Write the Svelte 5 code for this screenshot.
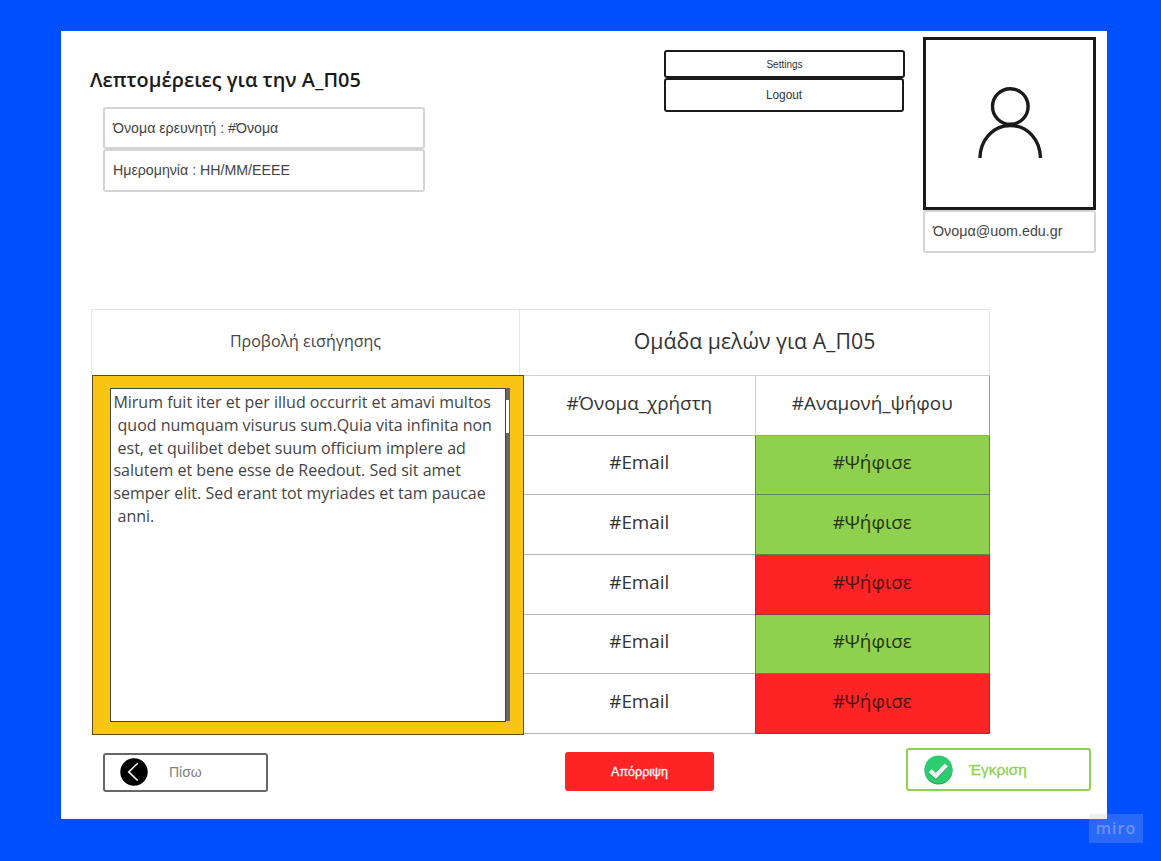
<script>
  const votes = [true, true, false, true, false];
  const proposal = [
    'Mirum fuit iter et per illud occurrit et amavi multos',
    ' quod numquam visurus sum.Quia vita infinita non',
    ' est, et quilibet debet suum officium implere ad',
    'salutem et bene esse de Reedout. Sed sit amet',
    'semper elit. Sed erant tot myriades et tam paucae',
    ' anni.'
  ];
</script>

<div class="board">
  <main class="panel">
    <header>
      <section class="details">
        <h1>Λεπτομέρειες για την Α_Π05</h1>
        <div class="field">Όνομα ερευνητή : #Όνομα</div>
        <div class="field date">Ημερομηνία : HH/MM/ΕΕΕΕ</div>
      </section>
      <nav>
        <button class="settings">Settings</button>
        <button class="logout">Logout</button>
      </nav>
      <section class="profile">
        <div class="avatar">
          <svg width="66" height="74" viewBox="0 0 66 74" fill="none" stroke="#1a1a1a" stroke-width="3.4">
            <circle cx="33.3" cy="20.5" r="17.8" />
            <path d="M2.900 72C3.400 53.500 16.100 39.500 33.300 39.500S63 53.500 63.500 72" />
          </svg>
        </div>
        <div class="field mail">Όνομα@uom.edu.gr</div>
      </section>
    </header>

    <section class="table">
      <div class="heads">
        <div class="head left"><span>Προβολή εισήγησης</span></div>
        <div class="head right"><span>Ομάδα μελών για Α_Π05</span></div>
      </div>
      <div class="content">
        <div class="proposal">
          <div class="text">{#each proposal as line}<p>{line}</p>{/each}</div>
          <div class="scroll"><div class="thumb"></div></div>
        </div>
        <div class="members">
          <div class="cell"><span>#Όνομα_χρήστη</span></div>
          <div class="cell vote"><span>#Αναμονή_ψήφου</span></div>
          {#each votes as yes}
            <div class="cell"><span>#Email</span></div>
            <div class="cell vote" class:yes class:no={!yes}><span>#Ψήφισε</span></div>
          {/each}
        </div>
      </div>
    </section>

    <footer>
      <button class="back">
        <svg width="28" height="28" viewBox="0 0 28 28">
          <circle cx="14" cy="14" r="13.700" fill="#000" />
          <path d="M17.700 5.300L8.700 13.900L17.700 22.500" fill="none" stroke="#fff" stroke-width="1.500" />
        </svg>
        <span>Πίσω</span>
      </button>
      <button class="reject"><span>Απόρριψη</span></button>
      <button class="approve">
        <svg width="29" height="30" viewBox="0 0 29 30">
          <circle cx="14.500" cy="15.500" r="14" fill="#20a35a" />
          <circle cx="14.500" cy="14.500" r="14" fill="#2ecc71" />
          <path d="M6.200 17L11.800 22.300L22.400 11.200" fill="none" stroke="#27ae60" stroke-width="4.400" />
          <path d="M6.200 15.700L11.800 21L22.400 9.900" fill="none" stroke="#ecf0f1" stroke-width="4.400" />
        </svg>
        <span>Έγκριση</span>
      </button>
    </footer>
  </main>
  <div class="watermark">miro</div>
</div>

<style>
  :global(body) { margin: 0; }
  .board, .board * { box-sizing: border-box; }
  .board {
    position: relative;
    width: 1161px;
    height: 861px;
    padding: 31px 54px 42px 61px;
    background: #0050ff;
    color: #1a1a1a;
    font-family: "Open Sans", "Noto Sans", sans-serif;
    overflow: hidden;
  }
  .panel { width: 1046px; height: 788px; background: #fff; }
  header { display: flex; height: 278px; }
  .details { width: 603px; padding: 35px 0 0 29px; }
  h1 {
    height: 41px;
    margin: 0;
    font-size: 19.900px;
    font-weight: 600;
    line-height: 27px;
    white-space: nowrap;
  }
  .field {
    display: flex;
    align-items: center;
    width: 322px;
    height: 42px;
    margin-left: 13px;
    padding: 0 0 1px 8px;
    border: 2px solid #d4d4d4;
    border-radius: 3px;
    font: 14.200px/20px "Liberation Sans", sans-serif;
    color: #444;
    white-space: nowrap;
  }
  .date { height: 43px; padding-bottom: 1px; }
  nav { display: flex; flex-direction: column; width: 259px; padding-top: 19px; }
  button {
    display: flex;
    align-items: center;
    margin: 0;
    padding: 0;
    background: #fff;
    font-family: "Liberation Sans", sans-serif;
  }
  nav button {
    justify-content: center;
    width: 240px;
    border: 2px solid #1a1a1a;
    border-radius: 3px;
    color: #333;
  }
  nav .settings { width: 241px; height: 28px; font-size: 10px; }
  nav .logout { height: 34px; padding-bottom: 1px; font-size: 11.850px; }
  .profile { width: 173px; padding-top: 6px; }
  .avatar {
    display: flex;
    justify-content: center;
    height: 173px;
    padding-top: 46px;
    border: 3px solid #1a1a1a;
  }
  .profile .mail { width: 173px; height: 43px; margin: 0; padding-bottom: 2px; font-size: 14.300px; }

  .table { width: 899px; margin-left: 30px; }
  .heads { display: flex; height: 66px; border: solid #e6e6e6; border-width: 1px 1px 0; }
  .head { display: flex; align-items: center; justify-content: center; color: #444; }
  .left { width: 428px; padding-bottom: 3px; border-right: 1px solid #e6e6e6; font-size: 16px; }
  .right { flex: 1; padding-bottom: 5px; color: #333; font-size: 21.300px; }
  .content { display: flex; height: 360px; padding-left: 1px; }
  .proposal {
    display: flex;
    width: 432px;
    padding: 12px 13px 12px 17px;
    border: 1px solid #5b4a12;
    background: #f8c513;
  }
  .text {
    width: 397px;
    height: 334px;
    padding: 2px 0 0 2.400px;
    border: 1px solid #444;
    background: #fff;
    color: #444;
    font-size: 16px;
    line-height: 22.800px;
  }
  .text p { margin: 0; white-space: pre; }
  .scroll { width: 4px; height: 333px; padding: 12px 1px 0 0; background: #666; }
  .thumb { height: 33px; background: #fff; }
  .members {
    display: grid;
    grid-template-columns: 230.500px 235.500px;
    grid-template-rows: repeat(6, 59.700px);
    height: 359px;
    border-top: 1px solid #cfcfcf;
  }
  .cell {
    display: flex;
    align-items: center;
    justify-content: center;
    padding-bottom: 5.500px;
    border-bottom: 1px solid #b7b7b7;
    font-size: 18.850px;
    color: #333;
  }
  .vote { border: solid rgba(70, 70, 70, .55); border-width: 0 1px 1px; }
  .vote:nth-child(2) { border-left-color: #ccc; }
  .yes { background: #8fd14f; color: #263315; }
  .no { background: #fc2424; color: #4a1212; }

  footer { display: flex; align-items: flex-start; height: 43px; margin: 13px 16px 0 42px; }
  .back { width: 165px; height: 39px; margin-top: 5px; padding: 0 0 2px 15px; border: 2px solid #666; border-radius: 3px; color: #808080; font-size: 14px; }
  .back svg { margin-right: 21px; }
  .reject { justify-content: center; width: 149px; height: 39px; margin: 4px 0 0 297px; border: 0; border-radius: 3px; background: #fc2424; color: #fff; font-size: 12.500px; -webkit-text-stroke: .3px; }
  .approve { width: 185px; height: 43px; margin-left: 192px; padding: 0 0 0 16px; border: 2px solid #8fd14f; border-radius: 3px; color: #8fd14f; font-size: 15.400px; -webkit-text-stroke: .3px; }
  .approve svg { margin-right: 16px; }
  .watermark {
    position: absolute;
    left: 1089px;
    top: 814px;
    width: 54px;
    height: 29px;
    background: rgba(176, 182, 226, .24);
    color: #6c93ee;
    font-size: 16px;
    font-weight: 600;
    line-height: 28px;
    letter-spacing: 1px;
    text-align: center;
  }
</style>
